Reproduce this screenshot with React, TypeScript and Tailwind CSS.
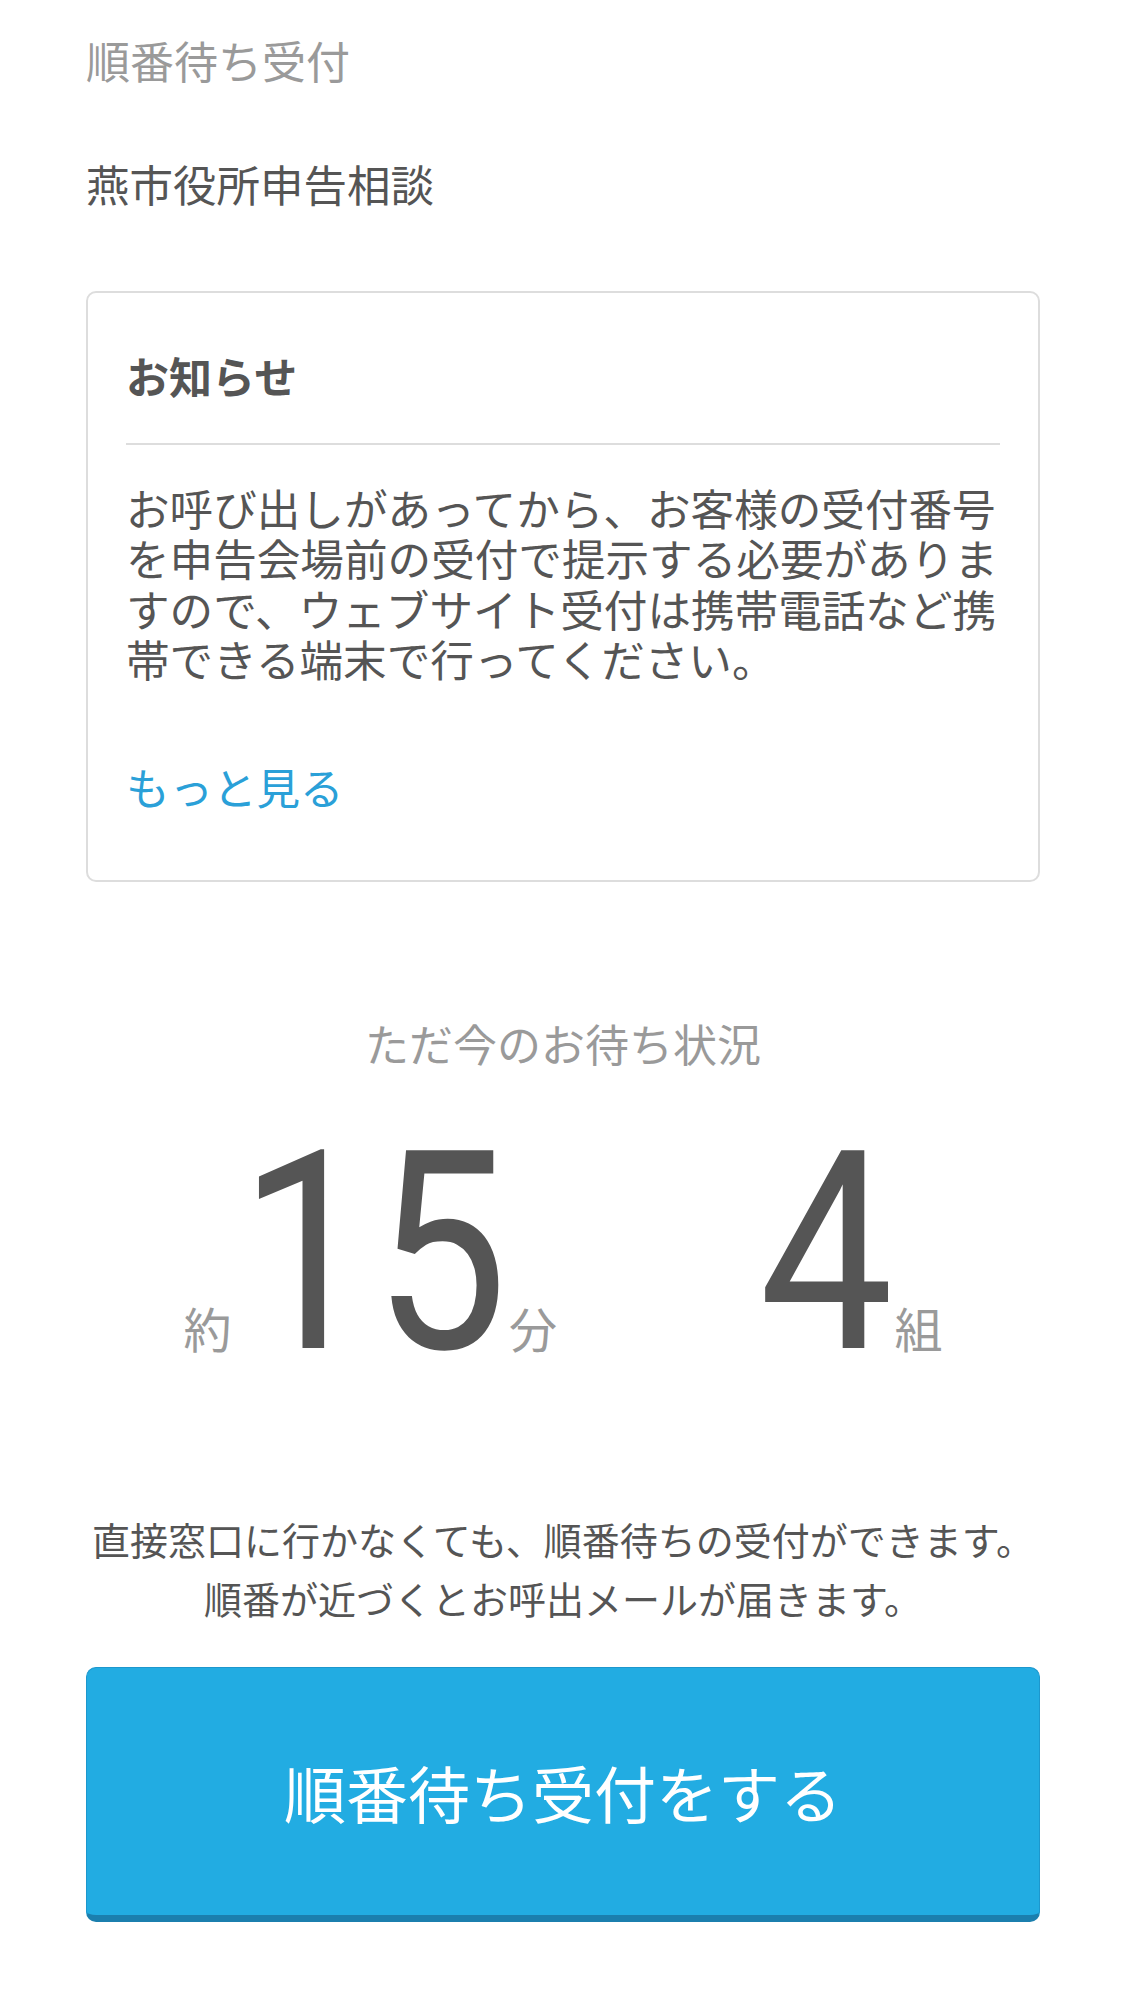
import React from "react";

export default function App() {
  return (
    <div className="min-h-[2000px] w-full bg-white font-['Noto_Sans_CJK_JP','Noto_Sans',sans-serif] text-[#555555]">
      <div className="px-[86px] pt-[34px]">
        <h1 className="text-[44px] font-normal leading-[52px] text-[#9a9a9a]">順番待ち受付</h1>
        <h2 className="mt-[72px] text-[43.5px] font-normal leading-[52px] text-[#555555]">燕市役所申告相談</h2>

        <section className="mt-[81px] rounded-[10px] border-2 border-[#dddddd] px-[38px] pb-[68px] pt-[57px]">
          <h3 className="text-[43px] font-bold leading-[50px] text-[#555555]">お知らせ</h3>
          <div className="mt-[43px] h-[2px] bg-[#dddddd]" />
          <p className="mt-[37px] text-[43.6px] leading-[50.3px] text-[#555555]">
            お呼び出しがあってから、お客様の受付番号を申告会場前の受付で提示する必要がありますので、ウェブサイト受付は携帯電話など携帯できる端末で行ってください。
          </p>
          <a href="#" className="mt-[79px] block text-[43.5px] leading-[50px] text-[#2aa0d8]">
            もっと見る
          </a>
        </section>

        <div className="mt-[136px] text-center text-[44px] leading-[50px] text-[#9a9a9a]">ただ今のお待ち状況</div>

        <div className="mt-[46px] flex items-baseline justify-center">
          <div className="flex items-baseline">
            <span className="text-[48px] leading-none text-[#9a9a9a]">約</span>
            <span className="ml-[7px] origin-left scale-x-[0.86] font-['Roboto',sans-serif] text-[278px] leading-none text-[#555555]">
              15
            </span>
            <span className="ml-[-42px] text-[48px] leading-none text-[#9a9a9a]">分</span>
          </div>
          <div className="ml-[202px] flex items-baseline">
            <span className="origin-left scale-x-[0.86] font-['Roboto',sans-serif] text-[278px] leading-none text-[#555555]">
              4
            </span>
            <span className="ml-[-21px] text-[48px] leading-none text-[#9a9a9a]">組</span>
          </div>
        </div>

        <p className="mt-[117px] text-center text-[38px] leading-[59px] text-[#555555]">
          直接窓口に行かなくても、順番待ちの受付ができます。
          <br />
          順番が近づくとお呼出メールが届きます。
        </p>

        <button
          type="button"
          className="mt-[40px] flex h-[255px] w-full items-center justify-center rounded-[10px] border border-b-[7px] border-[#1d97cd] border-b-[#1b7fae] bg-[#22ace2] text-[62px] font-normal leading-none text-white"
        >
          順番待ち受付をする
        </button>
      </div>
    </div>
  );
}
